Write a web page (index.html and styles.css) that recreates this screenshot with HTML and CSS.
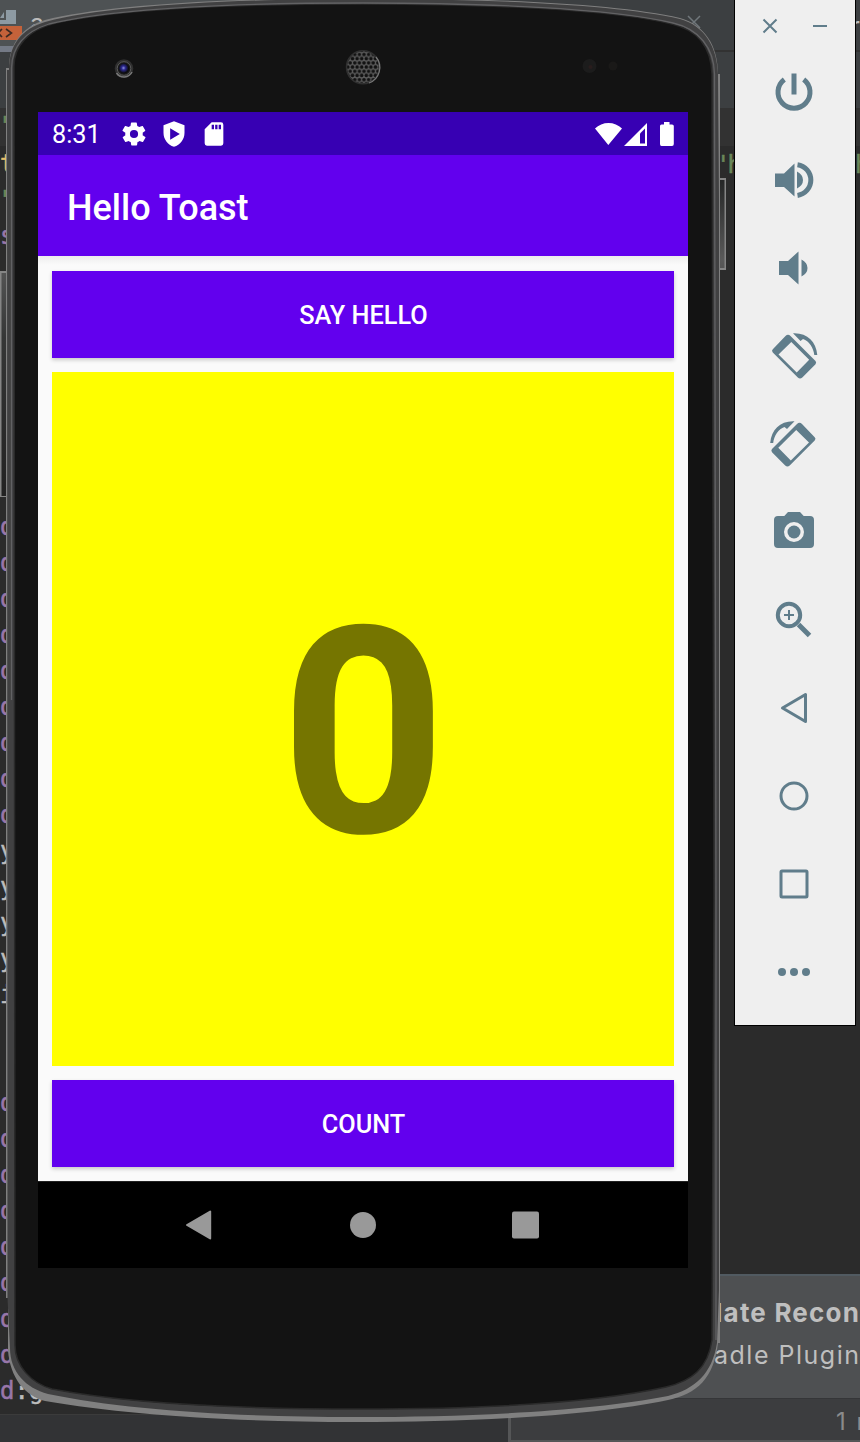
FILE: index.html
```html
<!DOCTYPE html>
<html lang="en">
<head>
<meta charset="utf-8">
<title>Hello Toast</title>
<link rel="stylesheet" href="styles.css">
</head>
<body>
<div class="desktop">
  <div class="ide">
    <header class="tabs">
      <div class="tab">
        <svg width="60" height="52" viewBox="0 0 60 52"><path fill="#8d9aa3" d="M0 18 4 12v6zM6 10h10v14H0v-4h6z"/><path fill="#c4623a" d="M0 26h22v14H0z"/><path d="M2 29-2 33l4 4M6 29l5.500 4-5.500 4" fill="none" stroke="#3c2a22" stroke-width="1.600"/><path fill="#747a86" d="M0 46h20v6H0z"/></svg>
        <span class="tab-name">a</span>
      </div>
      <svg class="tab-close" width="18" height="18" viewBox="0 0 18 18"><path d="M3 2 15 14M15 2 3 14" stroke="#70777b" stroke-width="1.500"/></svg>
      <span class="tab-next">r</span>
    </header>
    <div class="strip"></div>
    <main class="editor">
      <div class="code">
        <span class="line current str">"</span><span class="line tag">t<i class="str far">'h</i><i class="str edge">h</i></span><span class="line str">"</span><span class="line attr">s</span><span class="line">.</span>
        <span class="line gap"></span>
        <span class="line attr">d</span><span class="line attr">d</span><span class="line attr">d</span><span class="line attr">d</span><span class="line attr">d</span><span class="line attr">d</span><span class="line attr">d</span><span class="line attr">d</span><span class="line attr">d</span><span class="line">y</span><span class="line">y</span><span class="line">y</span><span class="line">y</span><span class="line">i</span><span class="line"></span><span class="line"></span><span class="line attr">d</span><span class="line attr">d</span><span class="line attr">d</span><span class="line attr">d</span><span class="line attr">d</span><span class="line attr">d</span><span class="line attr">d</span><span class="line attr">d</span><span class="line"><b class="attr">d</b>:g</span>
      </div>
    </main>
    <footer class="status"></footer>
  </div>

  <aside class="notice">
    <div class="notice-body"><strong>date Recon</strong><p>adle Plugin</p></div>
    <div class="notice-more">1 r</div>
  </aside>

  <section class="phone">
    <svg class="shell" width="735" height="1442" viewBox="0 0 735 1442">
      <defs>
        <linearGradient id="key" x2="0" y2="1"><stop offset="0" stop-color="#252626"/><stop offset=".25" stop-color="#595959"/><stop offset=".5" stop-color="#353636"/><stop offset="1" stop-color="#222"/></linearGradient>
        <pattern id="mesh" width="4.600" height="8.400" patternUnits="userSpaceOnUse" patternTransform="translate(359.400 64.900)"><rect width="5" height="9" fill="#5a5a5a"/><g fill="#111"><circle cx="2.300" cy="2.100" r="1.750"/><circle cx="0" cy="6.300" r="1.750"/><circle cx="4.600" cy="6.300" r="1.750"/></g></pattern>
        <radialGradient id="lens" cx=".45" cy=".45"><stop offset="0" stop-color="#8b92dd"/><stop offset=".4" stop-color="#2c2890"/><stop offset=".8" stop-color="#15153a"/><stop offset="1" stop-color="#0a0a0a"/></radialGradient>
      </defs>
      <path fill="#858585" d="M0 271h8v226H0zM718 178h8v92h-8z"/>
      <path fill="url(#key)" d="M1.500 273H7v223H1.500zM718 180h6.500v88H718z"/>
      <path fill="#808080" d="M6 68H9C9 44 22 27 45 20 105 5 225-2 363-2 480-2 615 3 680 18 705 25 718 46 718 74H720V1343H718C714 1378 697 1394 668 1400 590 1416 475 1422 355 1422 235 1422 125 1415 45 1401 25 1396 10 1378 8 1350V1298H6Z"/>
      <path fill="#414142" d="M7 70H9C9 44 22 29 45 22 105 6 225-1 363-1 480-1 615 4 680 19 705 26 717 47 718 74L719 200V1290L717 1343C712 1374 695 1389 668 1396 590 1411 475 1417 355 1417 235 1417 125 1410 48 1394 26 1388 10 1372 10 1348L7.500 1298Z"/>
      <path fill="#131313" stroke="#2a2a2a" stroke-width="1.500" d="M14 66C14 46 29 30 52 24 115 9 225 4 363 4 480 4 610 9 672 24 698 30 711 47 712 74L714 900 712 1340C708 1368 692 1381 666 1387 590 1404 475 1409 360 1409 235 1409 130 1404 52 1389 31 1383 15 1366 15 1345Z"/>
      <path fill="none" stroke="#626264" stroke-width="1.300" d="M11.500 700V68C12 45 27 31 49 24 115 8 225 3 363 3 480 3 610 8 673 23 699 29 714 48 714.500 74L716 900V1340"/>
      <circle cx="124" cy="68.500" r="9.300" fill="#303030"/><path d="M116.500 73a9 9 0 0 0 15.500-1" fill="none" stroke="#777" stroke-width="1.600"/><circle cx="124" cy="68.500" r="6.800" fill="#171717" stroke="#5a5a5a"/><circle cx="124" cy="68.500" r="5" fill="url(#lens)"/>
      <circle cx="363" cy="67.300" r="16.500" fill="url(#mesh)" stroke="#303030" stroke-width="1.500"/><path d="M376 57a16.500 16.500 0 0 1-7 26" fill="none" stroke="#777" stroke-width="1.200"/>
      <circle cx="589.500" cy="66" r="7" fill="#1c1c1c"/><circle cx="590.500" cy="67" r="2" fill="#291d1d"/><circle cx="613" cy="66" r="4.500" fill="#1a1918"/>
    </svg>

    <div class="screen">
      <div class="statusbar">
        <span class="clock">8:31</span>
        <svg class="sys" width="28" height="28" viewBox="0 0 24 24"><path fill="#fff" d="M19.400 13c0-.3.100-.6.100-1s0-.7-.1-1l2.100-1.600c.2-.2.200-.4.100-.6l-2-3.500c-.1-.2-.4-.3-.6-.2l-2.500 1c-.5-.4-1.100-.7-1.700-1l-.4-2.600c0-.2-.2-.4-.5-.4h-4c-.2 0-.5.200-.5.400l-.4 2.600c-.6.300-1.200.6-1.700 1l-2.500-1c-.2-.1-.5 0-.6.200l-2 3.500c-.1.200-.1.500.1.600L4.600 11c0 .3-.1.600-.1 1s0 .7.100 1l-2.100 1.600c-.2.200-.2.400-.1.600l2 3.500c.1.200.4.300.6.200l2.500-1c.5.400 1.100.7 1.700 1l.4 2.600c0 .2.200.4.500.4h4c.2 0 .5-.2.500-.4l.4-2.600c.6-.3 1.200-.6 1.700-1l2.500 1c.2.100.5 0 .6-.2l2-3.500c.1-.2.100-.5-.1-.6zM12 15.500a3.500 3.500 0 1 1 0-7 3.500 3.500 0 0 1 0 7z"/></svg>
        <svg class="sys" width="28" height="28" viewBox="0 0 24 24"><path fill="#fff" fill-rule="evenodd" d="M12 1 3 4.500V11c0 5.600 3.600 10.600 9 12 5.400-1.400 9-6.400 9-12V4.500zM8.700 7v10l8.300-5z"/></svg>
        <svg class="sys" width="28" height="28" viewBox="0 0 24 24"><path fill="#fff" fill-rule="evenodd" d="M18 2h-8L4 8v12a2 2 0 0 0 2 2h12a2 2 0 0 0 2-2V4a2 2 0 0 0-2-2zM10 4h2v4h-2zM13 4h2v4h-2zM16 4h2v4h-2z"/></svg>
        <svg class="radio" width="82" height="28" viewBox="0 0 82 28"><path fill="#fff" d="M1 8.500C8 1 21 1 28 8.500L14.300 25zM30 26 53 3v23z"/><path fill="#3700b3" d="M46 13.500 51 8.500v15h-5z"/><path fill="#fff" d="M66 6q0-1.500 1.500-1.500H70V2h5.500v2.500H78q1.800 0 1.800 1.500v18q0 2-1.800 2H67.500Q66 26 66 24z"/></svg>
      </div>
      <div class="appbar">Hello Toast</div>
      <div class="content">
        <div class="btn">SAY HELLO</div>
        <div class="count">0</div>
        <div class="btn">COUNT</div>
      </div>
      <div class="navbar">
        <svg width="32" height="32" viewBox="0 0 32 32"><path fill="#999" stroke="#999" stroke-width="2" stroke-linejoin="round" d="M2 16 25.200 2.500v27z"/></svg>
        <svg width="32" height="32" viewBox="0 0 32 32"><circle cx="16" cy="16" r="13" fill="#999"/></svg>
        <svg width="32" height="32" viewBox="0 0 32 32"><rect x="2" y="2.500" width="27" height="27" rx="2" fill="#999"/></svg>
      </div>
    </div>
  </section>

  <nav class="tools">
    <div class="window-keys">
      <svg width="16" height="16" viewBox="0 0 16 16"><path class="ln2" d="M1.500 1.500l13 13M14.500 1.500l-13 13"/></svg>
      <svg width="16" height="16" viewBox="0 0 16 16"><path class="ln2" d="M1 8h14"/></svg>
    </div>
    <svg class="tool" viewBox="0 0 48 48"><path class="ln5" d="M14.300 11.500a16 16 0 1 0 19.400 0M24 5.500v21"/></svg>
    <svg class="tool" viewBox="0 0 48 48"><path class="fl" d="M5 17.500h9L24.500 7.500v33L14 31H5zM27 15.500q6 3 6 8.500t-6 8.500z"/><path class="ln5" d="M27.500 8.700a15.500 15.500 0 0 1 0 30.700"/></svg>
    <svg class="tool" viewBox="0 0 48 48"><path class="fl" d="M9 17h9L28.500 7.500v33L18 31H9zM31.500 15.500q6 3 6 8.500t-6 8.500z"/></svg>
    <svg class="tool" viewBox="0 0 48 48"><path class="fl" fill-rule="evenodd" d="M2.800 17.300 15.500 4q2.500-2.300 5 0l25 25q1.300 1.600 0 3.200L32.300 45.500q-2.300 2-4.500 0L2.800 20.500q-1.600-1.600 0-3.200zM8.500 22.400 26.700 40.400 39.200 27.800 21.300 10z"/><path class="fl" d="M23 1.200c14-.7 23 8 24.300 21.800h-3C43.500 15.500 39 9.200 33 7l-2.500 2z"/></svg>
    <svg class="tool" viewBox="0 0 48 48"><g transform="translate(47.500 0) scale(-1 1)"><path class="fl" fill-rule="evenodd" d="M2.800 17.300 15.500 4q2.500-2.300 5 0l25 25q1.300 1.600 0 3.200L32.300 45.500q-2.300 2-4.500 0L2.800 20.500q-1.600-1.600 0-3.200zM8.500 22.400 26.700 40.400 39.200 27.800 21.300 10z"/><path class="fl" d="M23 1.200c14-.7 23 8 24.300 21.800h-3C43.500 15.500 39 9.200 33 7l-2.500 2z"/></g></svg>
    <svg class="tool" viewBox="0 0 48 48"><path class="fl" fill-rule="evenodd" d="M18 4h12l3.700 4H40q4 0 4 4v24q0 4-4 4H8q-4 0-4-4V12q0-4 4-4h6.300zM24 14a10 10 0 1 0 0 20 10 10 0 0 0 0-20z"/><circle class="fl" cx="24" cy="24" r="6.500"/></svg>
    <svg class="tool" viewBox="0 0 48 48"><circle class="ln4" cx="19" cy="19" r="11.200"/><path class="ln2" d="M14 19h10M19 14v10"/><path class="ln5" d="M28.500 28.500 39.500 39.500"/></svg>
    <svg class="tool" viewBox="0 0 48 48"><path class="ln3" d="M12.500 24 35.500 10.500v27z"/></svg>
    <svg class="tool" viewBox="0 0 48 48"><circle class="ln3" cx="24" cy="24" r="13"/></svg>
    <svg class="tool" viewBox="0 0 48 48"><rect class="ln3" x="11" y="11" width="26" height="26" rx="1"/></svg>
    <svg class="tool" viewBox="0 0 48 48"><circle class="fl" cx="12" cy="24" r="4"/><circle class="fl" cx="24" cy="24" r="4"/><circle class="fl" cx="36" cy="24" r="4"/></svg>
  </nav>
</div>
</body>
</html>
```
FILE: styles.css
```css
* { box-sizing: border-box; }
body { margin: 0; background: #2b2b2b; font-family: Roboto, sans-serif; }
svg { display: block; flex: none; }
.desktop { position: relative; width: 860px; height: 1442px; overflow: hidden; }

.ide { display: flex; flex-direction: column; height: 1442px; background: #2b2b2b; }
.tabs { display: flex; height: 52px; background: #3c3f41; border-bottom: 2px solid #323232; color: #bbb; font: 25px/46px Inter, sans-serif; }
.tab { display: flex; width: 260px; height: 52px; background: #4e5254; }
.tab-name { margin-left: -30px; }
.tab-close { margin: 14px 0 0 430px; }
.tab-next { margin-left: 148px; line-height: 52px; }
.strip { height: 56px; background: #3c3f41; }
.editor { flex: 1; overflow: hidden; }
.code { display: flex; flex-direction: column; font: 24px/36px "DejaVu Sans Mono", monospace; color: #bdbdbd; }
.line { position: relative; height: 36px; white-space: pre; -webkit-text-stroke: .5px; }
.line.current { background: #323232; height: 38px; }
.gap { height: 219px; }
.str { color: #6a8759; }
.tag { color: #e8bf6a; }
.attr { color: #9876aa; font-weight: normal; }
.far, .edge { position: absolute; top: 1px; left: 716px; font-style: normal; letter-spacing: -3px; }
.edge { left: 855px; }
.status { height: 28px; background: #323335; border-top: 1px solid #3b3b3b; }

.notice { position: absolute; left: 508px; top: 1274px; width: 352px; height: 168px; display: flex; flex-direction: column; overflow: hidden; border-left: 3px solid #555657; border-bottom: 2px solid #555657; color: #bfbfbf; font-family: Inter, sans-serif; font-size: 25px; white-space: nowrap; }
.notice-body { height: 124px; flex: none; padding: 22px 0 0 195px; background: #4e5052; border-top: 2px solid #515a61; }
.notice-body strong { display: block; font-size: 26px; line-height: 30px; letter-spacing: 1.200px; }
.notice-body p { margin: 12px 0 0 8px; line-height: 30px; letter-spacing: 1.500px; }
.notice-more { flex: 1; padding-left: 325px; background: #3c3d3f; border-top: 1px solid #353638; color: #8a8b8c; line-height: 45px; font-size: 24px; word-spacing: 4px; }

.phone { position: absolute; left: 0; top: 0; width: 735px; height: 1442px; padding: 112px 0 0 38px; }
.shell { position: absolute; left: 0; top: 0; }
.screen { position: relative; display: flex; flex-direction: column; width: 650px; height: 1156px; color: #fff; }
.statusbar { display: flex; align-items: center; height: 43px; padding: 0 12px 0 14px; background: #3700b3; }
.clock { width: 68px; font-size: 25.300px; line-height: 43px; padding-top: 2px; }
.sys { margin-right: 12px; }
.radio { margin-left: auto; }
.appbar { height: 101px; padding: 3px 0 0 29px; background: #6200ee; font-size: 36px; font-weight: 500; line-height: 101px; }
.content { display: flex; flex-direction: column; gap: 14px; height: 925px; padding: 15px 14.500px 14px 14.400px; background: linear-gradient(#ededed, #fafafa 9px); }
.btn { height: 87px; flex: none; background: #6200ee; text-align: center; font-size: 25.300px; font-weight: 500; line-height: 89px; padding-left: 1px; box-shadow: 0 2px 4px rgba(0,0,0,.2); }
.count { flex: 1; display: flex; align-items: center; justify-content: center; background: #ff0; color: #757500; font-size: 289px; font-weight: 700; line-height: 1; padding: 28px 0 0 1px; }
.navbar { display: flex; justify-content: center; align-items: center; gap: 130.500px; height: 87px; background: #000; border-top: 1px solid #222; }

.tools { position: absolute; left: 734px; top: -1px; width: 122px; height: 1027px; display: flex; flex-direction: column; align-items: center; background: #efefef; border: 1px solid #000; }
.window-keys { display: flex; flex: none; gap: 34px; height: 68px; padding: 18px 0 0; }
.tool { width: 48px; height: 48px; margin: 0 2px 40px 0; overflow: visible; }
.fl { fill: #607d8b; }
.ln2, .ln3, .ln4, .ln5 { fill: none; stroke: #607d8b; stroke-linejoin: round; }
.ln2 { stroke-width: 2; }
.ln3 { stroke-width: 3; }
.ln4 { stroke-width: 4; }
.ln5 { stroke-width: 5; }
```
